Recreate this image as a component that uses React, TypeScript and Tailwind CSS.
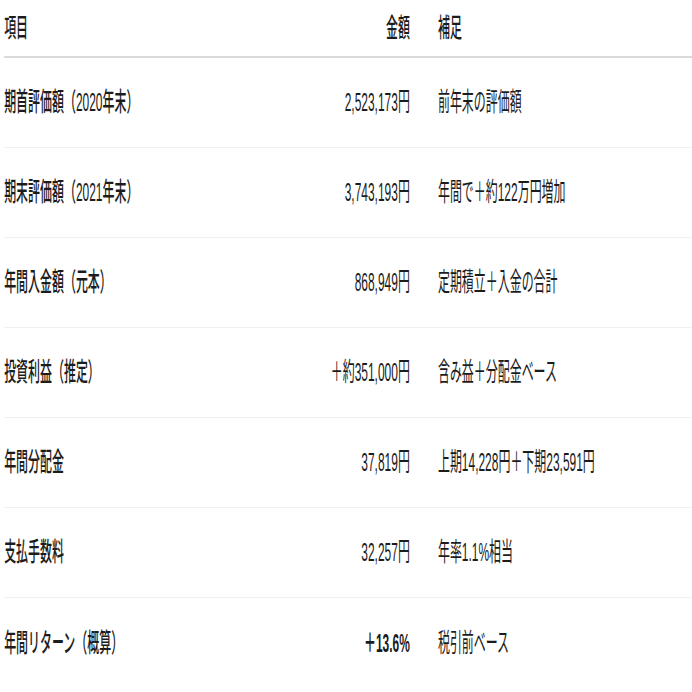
const rows = [
  { label: "期首評価額（2020年末）", amount: "2,523,173円", note: "前年末の評価額" },
  { label: "期末評価額（2021年末）", amount: "3,743,193円", note: "年間で＋約122万円増加" },
  { label: "年間入金額（元本）", amount: "868,949円", note: "定期積立＋入金の合計" },
  { label: "投資利益（推定）", amount: "＋約351,000円", note: "含み益＋分配金ベース" },
  { label: "年間分配金", amount: "37,819円", note: "上期14,228円＋下期23,591円" },
  { label: "支払手数料", amount: "32,257円", note: "年率1.1%相当" },
  { label: "年間リターン（概算）", amount: "＋13.6%", note: "税引前ベース", strong: true },
];

export default function App() {
  return (
    <div className="w-[692px] h-[692px] overflow-hidden bg-white text-[#1c1c1c] font-['Liberation_Sans','Noto_Sans_CJK_JP',sans-serif]">
      <div className="w-[1510px] origin-top-left scale-x-[0.46] pl-[9px]">
        <div className="grid grid-cols-[621px_200px_1fr] gap-x-[61px] items-center h-[58px] border-b-2 border-[#dadada] text-[26px] font-medium">
          <div>項目</div>
          <div className="text-right">金額</div>
          <div>補足</div>
        </div>
        {rows.map((r, i) => (
          <div
            key={r.label}
            className={`grid grid-cols-[621px_200px_1fr] gap-x-[61px] items-center h-[90px] text-[26px] ${
              i < rows.length - 1 ? "border-b border-[#f0f0f0]" : ""
            }`}
          >
            <div className="font-medium">{r.label}</div>
            <div className={`text-right ${r.strong ? "font-bold" : ""}`}>{r.amount}</div>
            <div>{r.note}</div>
          </div>
        ))}
      </div>
    </div>
  );
}
